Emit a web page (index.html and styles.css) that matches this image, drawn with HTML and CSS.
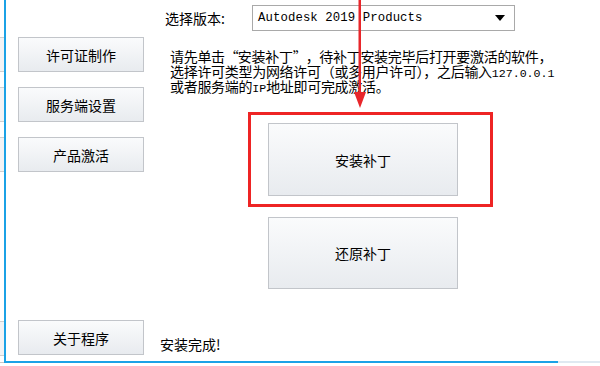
FILE: index.html
```html
<!DOCTYPE html>
<html lang="zh-CN">
<head>
<meta charset="utf-8">
<title>Autodesk 2019 注册机</title>
<link rel="stylesheet" href="styles.css">
</head>
<body>
<div class="screen">
  <div class="edge">
    <div class="ghost g1"></div>
    <div class="ghost g2"></div>
    <div class="ghost g3"></div>
    <div class="ghost g4"></div>
  </div>
  <div class="window">
    <div class="side">
      <button class="btn side-btn">许可证制作</button>
      <button class="btn side-btn">服务端设置</button>
      <button class="btn side-btn">产品激活</button>
      <button class="btn side-btn about">关于程序</button>
    </div>
    <div class="main">
      <div class="version-row">
        <span class="version-label">选择版本:</span>
        <div class="select">
          <span class="select-text">Autodesk 2019 Products</span>
          <span class="select-arrow"></span>
        </div>
      </div>
      <div class="hint">
        <span class="line">请先单击<span class="q ql">“</span>安装补丁<span class="q qr">”</span>，待补丁安装完毕后打开要激活的软件，</span>
        <span class="line">选择许可类型为网络许可（或多用户许可），之后输入<span class="ip">127.0.0.1</span></span>
        <span class="line">或者服务端的<span class="ip">IP</span>地址即可完成激活。</span>
      </div>
      <button class="btn big-btn install">安装补丁</button>
      <button class="btn big-btn restore">还原补丁</button>
      <div class="status">安装完成!</div>
    </div>
  </div>
  <div class="rest"></div>
  <div class="mark-box"></div>
  <svg class="mark-arrow" width="16" height="110" viewBox="0 0 16 110">
    <rect x="6.5" y="0" width="2.5" height="96" fill="#e8262b"/>
    <polygon points="2,92 14,92 8,108" fill="#e8262b"/>
  </svg>
</div>
</body>
</html>
```
FILE: styles.css
```css
* { box-sizing: border-box; }
html, body { margin: 0; padding: 0; background: #fff; }
body {
  width: 600px;
  height: 366px;
  overflow: hidden;
  font-family: "Noto Sans CJK SC", "Noto Sans", sans-serif;
  color: #111;
}
.screen {
  position: relative;
  display: flex;
  width: 600px;
  height: 366px;
}
.edge {
  width: 4px;
  height: 363px;
  display: flex;
  flex-direction: column;
  padding-top: 37px;
  gap: 15px;
  border-bottom: 1px solid #c8c8c8;
}
.ghost {
  height: 35px;
  background: #f2f3f5;
  border-top: 1px solid #d0d0d0;
  border-bottom: 1px solid #d0d0d0;
}
.ghost.g4 { margin-top: auto; margin-bottom: 6px; }
.window {
  width: 554px;
  height: 363px;
  border-left: 2px solid #1ba2e6;
  border-bottom: 2px solid #1ba2e6;
  display: grid;
  grid-template-columns: 138px 1fr;
}
.rest {
  flex: 1;
  height: 363px;
  border-bottom: 2px solid #dfe9f1;
}
.side {
  display: flex;
  flex-direction: column;
  padding: 37px 0 6px 12px;
  gap: 15px;
}
.btn {
  font-family: "Noto Sans CJK SC", "Noto Sans", sans-serif;
  font-size: 14px;
  color: #000;
  border: 1px solid #c2c5ca;
  border-radius: 0;
  background: linear-gradient(#fafbfc, #e8ebef);
  padding: 0;
  margin: 0;
  line-height: 1;
}
.side-btn {
  width: 126px;
  height: 35px;
}
.about { margin-top: auto; }
.main {
  display: flex;
  flex-direction: column;
  align-items: flex-start;
}
.version-row {
  display: flex;
  align-items: center;
  margin-top: 5px;
  padding-left: 21px;
  height: 26px;
}
.version-label {
  width: 87px;
  font-size: 14px;
  line-height: 14px;
  color: #000;
}
.select {
  width: 263px;
  height: 26px;
  border: 1px solid #a9a9a9;
  background: #fff;
  display: flex;
  align-items: center;
  justify-content: space-between;
  padding: 0 5px 0 5px;
}
.select-text {
  font-family: "Liberation Mono", monospace;
  font-size: 12.3px;
  color: #000;
  letter-spacing: 0.1px;
}
.select-arrow {
  width: 0;
  height: 0;
  border-left: 5px solid transparent;
  border-right: 5px solid transparent;
  border-top: 6px solid #000;
  margin-right: 4px;
}
.hint {
  margin: 18px 0 0 26px;
  display: flex;
  flex-direction: column;
  font-size: 14px;
  color: #000;
}
.line {
  display: block;
  height: 15px;
  line-height: 15px;
  white-space: nowrap;
  letter-spacing: -0.3px;
}
.q {
  display: inline-block;
  width: 13px;
}
.ql { text-align: right; }
.qr { text-align: left; }
.ip {
  font-family: "Liberation Mono", monospace;
  font-size: 11.6px;
  line-height: 14px;
  letter-spacing: 0;
}
.big-btn {
  width: 190px;
  margin-left: 124px;
}
.install {
  height: 73px;
  margin-top: 29px;
}
.restore {
  height: 72px;
  margin-top: 21px;
}
.status {
  margin-top: auto;
  margin-bottom: 10px;
  padding-left: 16px;
  font-size: 14px;
  line-height: 14px;
  color: #000;
}
.mark-box {
  position: absolute;
  left: 248px;
  top: 112px;
  width: 245px;
  height: 95px;
  border: 3px solid #ee2424;
}
.mark-arrow {
  position: absolute;
  left: 352px;
  top: 0;
}
```
